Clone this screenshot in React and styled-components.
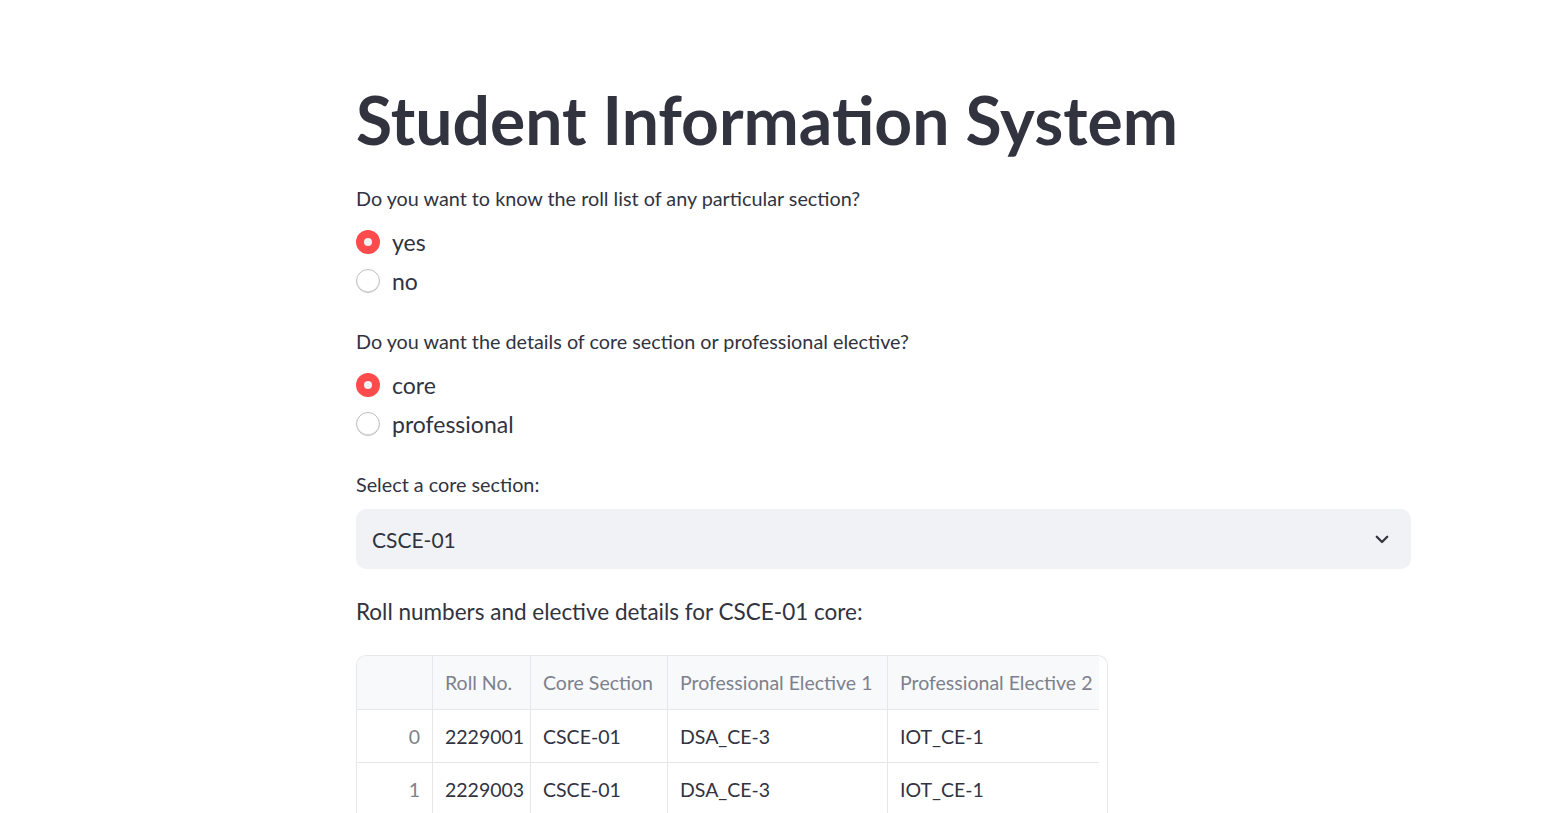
import styled, { createGlobalStyle } from "styled-components";

const GlobalStyles = createGlobalStyle`
body{
  margin:0;
  padding:0;
  background:#ffffff;
  font-family: "Lato", "Liberation Sans", sans-serif;
  color:#31333f;
}
`;

const Page = styled.div`
  padding: 77px 0 0 356px;
  width: 1055px;
  height: 813px;
  overflow: hidden;
  box-sizing: content-box;
`;

const Title = styled.h1`
  margin: 0;
  font-size: 66px;
  font-weight: 700;
  line-height: 86px;
  color: #31333f;
`;

const Label = styled.div`
  font-size: 19.8px;
  line-height: 28px;
  color: #31333f;
  margin-top: ${(p) => p.top || 0}px;
`;

const RadioGroup = styled.div`
  display: flex;
  flex-direction: column;
  gap: 11px;
  margin-top: 16px;
`;

const RadioRow = styled.div`
  display: flex;
  align-items: center;
  gap: 12px;
  height: 28px;
  font-size: 23px;
  color: #31333f;
`;

const Dot = styled.span`
  width: 24px;
  height: 24px;
  border-radius: 50%;
  box-sizing: border-box;
  flex-shrink: 0;
  display: flex;
  align-items: center;
  justify-content: center;
  background: ${(p) => (p.checked ? "#ff4b4b" : "#ffffff")};
  border: ${(p) => (p.checked ? "none" : "1px solid #bdbfc4")};
  box-shadow: ${(p) => (p.checked ? "none" : "inset 0 -1px 1px rgba(0,0,0,0.15)")};
  &::after {
    content: "";
    display: ${(p) => (p.checked ? "block" : "none")};
    width: 8px;
    height: 8px;
    border-radius: 50%;
    background: #f0f2f6;
  }
`;

const Select = styled.div`
  margin-top: 11px;
  height: 60px;
  border-radius: 10px;
  background: #f0f2f6;
  display: flex;
  align-items: center;
  justify-content: space-between;
  padding: 0 20px 0 16px;
  font-size: 21px;
  color: #31333f;
`;

const Subtitle = styled.div`
  margin-top: 27px;
  font-size: 22.5px;
  line-height: 32px;
  color: #31333f;
`;

const TableWrap = styled.div`
  margin-top: 27px;
  width: 752px;
  border: 1px solid #e6e7eb;
  border-bottom: none;
  border-radius: 10px 10px 0 0;
  overflow: hidden;
  padding-right: 9px;
  box-sizing: border-box;
`;

const Grid = styled.div`
  display: grid;
  grid-template-columns: 76px 98px 137px 220px 211px;
  font-size: 19.5px;
`;

const Cell = styled.div`
  height: ${(p) => (p.head ? 54 : 53)}px;
  display: flex;
  align-items: center;
  justify-content: ${(p) => (p.right ? "flex-end" : "flex-start")};
  padding: 0 12px;
  box-sizing: border-box;
  background: ${(p) => (p.head ? "#f8f9fb" : "#ffffff")};
  color: ${(p) => (p.muted ? "#7d818c" : "#31333f")};
  border-right: ${(p) => (p.last ? "none" : "1px solid #e6e7eb")};
  border-bottom: 1px solid #e6e7eb;
  white-space: nowrap;
`;

const Chevron = () => (
  <svg width="18" height="18" viewBox="0 0 24 24" fill="none" stroke="#31333f" strokeWidth="3" strokeLinecap="round" strokeLinejoin="round">
    <path d="M5 9l7 7 7-7" />
  </svg>
);

const Radio = ({ checked, children }) => (
  <RadioRow>
    <Dot checked={checked} />
    {children}
  </RadioRow>
);

const cols = ["Roll No.", "Core Section", "Professional Elective 1", "Professional Elective 2"];
const rows = [
  ["0", "2229001", "CSCE-01", "DSA_CE-3", "IOT_CE-1"],
  ["1", "2229003", "CSCE-01", "DSA_CE-3", "IOT_CE-1"],
];

function App() {
  return (
    <Page>
      <GlobalStyles />
      <Title>Student Information System</Title>
      <Label top={21}>Do you want to know the roll list of any particular section?</Label>
      <RadioGroup>
        <Radio checked>yes</Radio>
        <Radio>no</Radio>
      </RadioGroup>
      <Label top={32}>Do you want the details of core section or professional elective?</Label>
      <RadioGroup>
        <Radio checked>core</Radio>
        <Radio>professional</Radio>
      </RadioGroup>
      <Label top={32}>Select a core section:</Label>
      <Select>
        <span>CSCE-01</span>
        <Chevron />
      </Select>
      <Subtitle>Roll numbers and elective details for CSCE-01 core:</Subtitle>
      <TableWrap>
        <Grid>
          <Cell head />
          {cols.map((c, i) => (
            <Cell head muted key={c} last={i === cols.length - 1}>{c}</Cell>
          ))}
          {rows.map((r) =>
            r.map((v, i) => (
              <Cell key={r[0] + i} right={i === 0} muted={i === 0} last={i === r.length - 1}>{v}</Cell>
            ))
          )}
        </Grid>
      </TableWrap>
    </Page>
  );
}

export default App;
